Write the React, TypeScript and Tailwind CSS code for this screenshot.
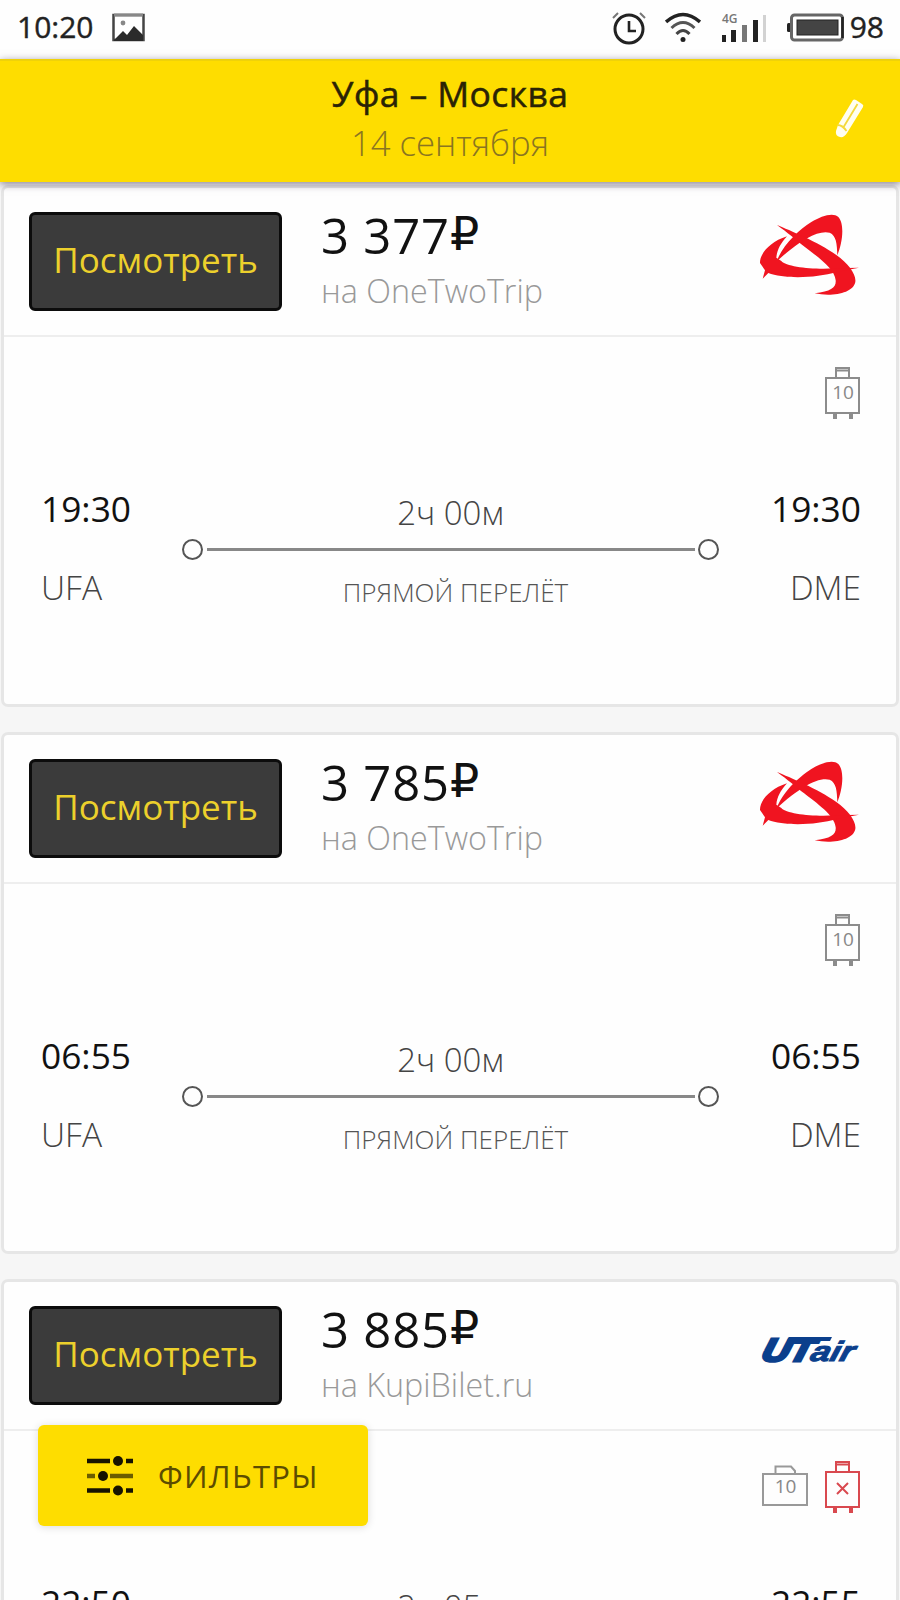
type Flight = {
  price: string;
  agency: string;
  airline: "red" | "utair";
  bags: "checked" | "cabinOnly";
  departure: string;
  arrival: string;
  duration: string;
};

const flights: Flight[] = [
  {
    price: "3 377",
    agency: "на OneTwoTrip",
    airline: "red",
    bags: "checked",
    departure: "19:30",
    arrival: "19:30",
    duration: "2ч 00м",
  },
  {
    price: "3 785",
    agency: "на OneTwoTrip",
    airline: "red",
    bags: "checked",
    departure: "06:55",
    arrival: "06:55",
    duration: "2ч 00м",
  },
  {
    price: "3 885",
    agency: "на KupiBilet.ru",
    airline: "utair",
    bags: "cabinOnly",
    departure: "22:50",
    arrival: "22:55",
    duration: "2ч 05м",
  },
];

const StatusBar = () => (
  <div className="flex h-[59px] items-center bg-[#fefefe] pl-[17px] pr-[16px] text-[30px] leading-[54px] text-[#222]">
    <span className="h-[54px] w-[95px] -mt-[5px] [-webkit-text-stroke:0.4px_#222]">10:20</span>
    <svg width="34" height="30" viewBox="0 0 34 30" className="-mt-[3px]">
      <rect x="1.5" y="2" width="30" height="25" fill="#fff" stroke="#444" strokeWidth="2.5" />
      <path d="M2 2h29" stroke="#888" strokeWidth="3" />
      <path d="M2 27l9-9 4 4 7-9 9 9v6H2z" fill="#2b2b2b" />
      <circle cx="11" cy="10" r="2.4" fill="#888" />
    </svg>

    <div className="ml-auto flex items-center -mt-[4px]">
      <svg width="34" height="36" viewBox="0 0 34 36" fill="none" stroke="#222">
        <circle cx="17" cy="19" r="14" strokeWidth="3" />
        <path d="M17 11v10h7" strokeWidth="2.6" />
        <path d="M1 8l5-5M28 3l5 5" stroke="#777" strokeWidth="2" />
      </svg>
      <svg width="36" height="34" viewBox="0 0 36 34" fill="none" stroke="#222" className="ml-[19px]">
        <path d="M1 11Q18-4 35 11" strokeWidth="3.5" />
        <path d="M6.500 17Q18 6 29.500 17" strokeWidth="3" stroke="#555" />
        <path d="M11.500 23Q18 16 24.500 23" strokeWidth="3" stroke="#444" />
        <circle cx="18" cy="28.500" r="2.500" fill="#222" stroke="none" />
      </svg>
      <svg width="46" height="34" viewBox="0 0 46 34" className="ml-[20px]">
        <text x="1" y="12" fontSize="12" fontWeight="600" fill="#777">4G</text>
        <rect x="1" y="24" width="4" height="7" fill="#222" />
        <rect x="10" y="19" width="5" height="12" fill="#222" />
        <rect x="21" y="14" width="5" height="17" fill="#777" />
        <rect x="32" y="9" width="5" height="22" fill="#222" />
        <rect x="42" y="4" width="3" height="27" fill="#d2d2d2" />
      </svg>
      <svg width="58" height="30" viewBox="0 0 58 30" className="ml-[20px]">
        <rect x="0" y="10" width="4" height="9" rx="1.500" fill="#222" />
        <rect x="4.500" y="2" width="51" height="25" rx="3" fill="#fff" stroke="#666" strokeWidth="3" />
        <path d="M55.500 4v21" stroke="#222" strokeWidth="2.500" />
        <rect x="10" y="7" width="41" height="15" fill="#444" stroke="#222" />
      </svg>
      <span className="-mt-[2px] ml-[5px] h-[54px] [-webkit-text-stroke:0.4px_#222]">98</span>
    </div>
  </div>
);

const PencilIcon = () => (
  <svg width="30" height="40" viewBox="0 0 30 40">
    <path d="M18 1q1-1 3 0l6 4q2 1 1 3L12 34q-3 5-7 4-5-1-4-6l2-6z" fill="#fffef0" />
    <path d="M22.500 5L8 29M2.500 26q5 0 9 6" stroke="#f4d93c" strokeWidth="1.800" fill="none" />
  </svg>
);

const Header = () => (
  <header className="relative z-10 flex h-[123px] justify-center border-t-2 border-[#efd20a] bg-[#fedd00] shadow-[0_2px_8px_rgba(40,30,60,0.55)]">
    <div className="flex flex-col items-center pt-[8px]">
      <h1 className="text-[35.5px] leading-[48px] tracking-[0.4px] text-[#2a2305] [-webkit-text-stroke:0.5px_#2a2305]">Уфа – Москва</h1>
      <p className="mt-[3px] text-[34.7px] font-light leading-[46px] text-[#8a7520]">14 сентября</p>
    </div>
    <button className="absolute right-[35px] top-[38px]">
      <PencilIcon />
    </button>
  </header>
);

const RedLogo = () => (
  <svg width="102" height="85" viewBox="55 65 306 255" fill="#f01420">
    <path d="M112 212C125 170 175 120 215 95C245 77 280 65 296 80C316 102 308 160 293 195C292 160 290 136 270 127C235 118 180 150 112 212Z" />
    <path d="M112 104C150 120 235 155 290 194C325 220 350 250 347 275C340 310 275 320 225 309C275 303 290 290 288 270C285 235 235 200 185 162C165 145 145 128 112 104Z" />
    <path d="M142 138C90 155 60 190 61 218L76 240L69 265L86 248C130 266 230 264 290 245L358 232L285 234C220 238 140 230 125 212L110 202C112 180 122 160 142 138Z" />
  </svg>
);

const UtairLogo = () => (
  <svg width="102" height="36" viewBox="0 0 102 36" fill="#0b3f8c" fontFamily="Liberation Sans" fontWeight="700" fontStyle="italic" className="overflow-visible">
    {/* crossbar that joins the U and the T */}
    <path d="M31 7H74L72 11H29z" />
    <g transform="translate(0 31) skewX(-16)" stroke="#0b3f8c">
      <text x="2" y="0" fontSize="32" textLength="51" lengthAdjust="spacingAndGlyphs" strokeWidth="3">UT</text>
      <text x="51" y="0" fontSize="28" textLength="43" lengthAdjust="spacingAndGlyphs" strokeWidth="1">air</text>
    </g>
  </svg>
);

const Suitcase = ({ missing }: { missing?: boolean }) => (
  <svg width="36" height="54" viewBox="0 0 36 54" fill="none" stroke={missing ? "#d9494f" : "#8c8c8c"} strokeWidth="2">
    <rect x="1" y="12" width="33" height="35" />
    <path d="M11 12V2h13v10M11 4.500h13" />
    <path d="M10 48v5M26 48v5" strokeWidth="4" />
    {missing ? (
      <path d="M12 23l11 11M23 23l-11 11" />
    ) : (
      <text x="18" y="33" textAnchor="middle" fontSize="19" fill="#888" stroke="none">10</text>
    )}
  </svg>
);

const CabinBag = () => (
  <svg width="46" height="54" viewBox="0 0 46 54" fill="none" stroke="#999" strokeWidth="2">
    <rect x="1" y="14" width="44" height="31" />
    <path d="M13.500 14V6.500H29L33 11v3" />
    <text x="23.500" y="33" textAnchor="middle" fontSize="19" fill="#888" stroke="none">10</text>
  </svg>
);

const FlightCard = ({ flight }: { flight: Flight }) => (
  <li className="h-[522px] shrink-0 rounded-[7px] border-[3px] border-[#e6e6e6] bg-[#fefefe]">
    <div className="flex h-[149px] border-b-2 border-[#eee] pl-[25px] pr-[36px]">
      <button className="mt-[24px] h-[99px] w-[253px] rounded-[6px] border-[3px] border-[#0c0c0c] bg-[#3b3b3b] pb-[3px] text-[35px] text-[#ecd02c]">
        Посмотреть
      </button>
      <div className="ml-[39px] pt-[17px]">
        <div className="flex h-[60px] text-[49px] leading-[60px] text-[#111]">
          <span className="w-[129px] whitespace-nowrap tracking-[0.8px]">{flight.price}</span>
          <span className="-mt-px font-['DejaVu_Sans'] text-[46px]">₽</span>
        </div>
        <div className="mt-[3px] text-[32.3px] font-light leading-[44px] text-[#999]">{flight.agency}</div>
      </div>
      <div className="ml-auto flex h-[132px] items-center">
        {flight.airline === "red" ? <RedLogo /> : <UtairLogo />}
      </div>
    </div>

    <div className="flex justify-end gap-[17px] pr-[35px] pt-[29px]">
      {flight.bags === "cabinOnly" && <CabinBag />}
      <Suitcase missing={flight.bags === "cabinOnly"} />
    </div>

    <div className="mt-[63px] flex justify-between pl-[37px] pr-[35px]">
      <div className="w-[141px]">
        <div className="text-[35.300px] leading-[50px] text-[#111]">{flight.departure}</div>
        <div className="mt-[32px] text-[33.500px] font-light leading-[44px] text-[#444]">UFA</div>
      </div>
      <div className="flex w-[538px] flex-col items-center pt-[8px]">
        <div className="text-[33px] font-light leading-[44px] text-[#444]">{flight.duration}</div>
        <div className="mt-[4px] flex h-[20px] w-full items-center justify-between">
          <span className="size-[21px] rounded-full border-[2.5px] border-[#555]" />
          <span className="h-[3px] w-[488px] bg-[#888]" />
          <span className="size-[21px] rounded-full border-[2.5px] border-[#555]" />
        </div>
        <div className="mt-[15px] pl-[10px] text-[26px] font-light leading-[36px] text-[#555]">ПРЯМОЙ ПЕРЕЛЁТ</div>
      </div>
      <div className="w-[142px] text-right">
        <div className="text-[35.300px] leading-[50px] text-[#111]">{flight.arrival}</div>
        <div className="mt-[32px] text-[33.500px] font-light leading-[44px] text-[#444]">DME</div>
      </div>
    </div>
  </li>
);

const FiltersIcon = () => (
  <svg width="46" height="40" viewBox="0 0 46 40" stroke="#161200" strokeWidth="4.500">
    <path d="M0 5h23M39 5h7M0 34.500h23M39 34.500h7" />
    <path d="M0 20h8M23 20h23" stroke="#6b5d00" />
    <g fill="#161200" stroke="none">
      <circle cx="31" cy="5" r="5" />
      <circle cx="16" cy="20" r="5" />
      <circle cx="31" cy="34.500" r="5" />
    </g>
  </svg>
);

const App = () => {
  return (
    <div className="relative flex h-[1600px] w-[900px] flex-col overflow-hidden bg-[#f6f6f6] font-['Open_Sans','Noto_Sans',sans-serif]">
      <StatusBar />
      <Header />
      <ul className="mt-[3px] flex flex-1 flex-col gap-[25px] overflow-hidden px-px">
        {flights.map((flight) => (
          <FlightCard key={flight.price} flight={flight} />
        ))}
      </ul>

      <button className="absolute left-[38px] top-[1425px] flex h-[101px] w-[330px] items-center rounded-[6px] bg-[#fedd00] pl-[49px] shadow-[0_1px_8px_rgba(0,0,0,0.14)]">
        <FiltersIcon />
        <span className="ml-[25px] pt-px text-[31px] tracking-[1.3px] text-[#5c4c00]">ФИЛЬТРЫ</span>
      </button>
    </div>
  );
};

export default App;
